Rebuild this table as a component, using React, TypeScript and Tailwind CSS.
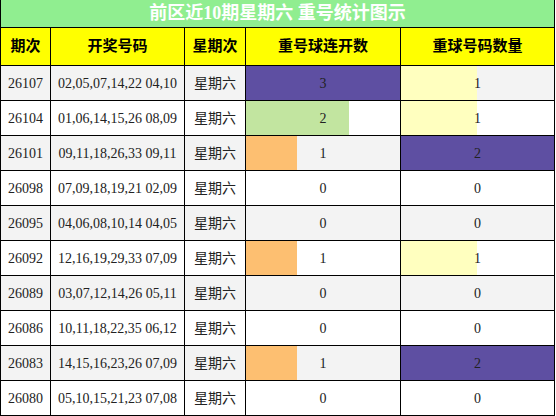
const rows = [
  { no: "26107", nums: "02,05,07,14,22 04,10", a: 3, b: 1 },
  { no: "26104", nums: "01,06,14,15,26 08,09", a: 2, b: 1 },
  { no: "26101", nums: "09,11,18,26,33 09,11", a: 1, b: 2 },
  { no: "26098", nums: "07,09,18,19,21 02,09", a: 0, b: 0 },
  { no: "26095", nums: "04,06,08,10,14 04,05", a: 0, b: 0 },
  { no: "26092", nums: "12,16,19,29,33 07,09", a: 1, b: 1 },
  { no: "26089", nums: "03,07,12,14,26 05,11", a: 0, b: 0 },
  { no: "26086", nums: "10,11,18,22,35 06,12", a: 0, b: 0 },
  { no: "26083", nums: "14,15,16,23,26 07,09", a: 1, b: 2 },
  { no: "26080", nums: "05,10,15,21,23 07,08", a: 0, b: 0 },
];

const headers = ["期次", "开奖号码", "星期次", "重号球连开数", "重球号码数量"];

// 连开数配色
const colorA: Record<number, string> = { 3: "#5e4fa2", 2: "#c2e5a0", 1: "#fdbf71" };
// 数量配色
const colorB: Record<number, string> = { 2: "#5e4fa2", 1: "#ffffbf" };

const cell = "flex items-center justify-center text-[14px] text-[#222]";

function BarCell({ value, max, color, odd }: { value: number; max: number; color?: string; odd: boolean }) {
  const rowBg = odd ? "#ffffff" : "#f3f3f3";
  const pct = (value / max) * 100;
  return (
    <div
      className={`${cell} ${odd ? "bg-white" : "bg-[#f3f3f3]"}`}
      style={value > 0 && color ? { background: `linear-gradient(to right, ${color} ${pct}%, ${rowBg} ${pct}%)` } : undefined}
    >
      {value}
    </div>
  );
}

export default function App() {
  const maxA = Math.max(...rows.map((r) => r.a));
  const maxB = Math.max(...rows.map((r) => r.b));

  return (
    <div className="h-[416px] w-[556px] bg-white font-['Liberation_Serif','Noto_Sans_CJK_SC',serif]">
      <div className="grid w-[555px] grid-cols-[49px_133px_60px_154px_153px] grid-rows-[27px_37px_repeat(10,34px)] gap-px bg-black px-px pb-px">
        {/* 标题 */}
        <div className="col-span-5 flex items-center justify-center bg-[#90ee90] text-[18px] font-bold text-white">
          前区近10期星期六 重号统计图示
        </div>

        {/* 表头 */}
        {headers.map((h) => (
          <div key={h} className="flex items-center justify-center bg-[#ffff00] text-[15px] font-bold text-black">
            {h}
          </div>
        ))}

        {/* 数据行 */}
        {rows.map((r, i) => {
          const odd = i % 2 === 1;
          const bg = odd ? "bg-white" : "bg-[#f3f3f3]";
          return [
            <div key={r.no + "-no"} className={`${cell} ${bg}`}>
              {r.no}
            </div>,
            <div key={r.no + "-nums"} className={`${cell} ${bg}`}>
              {r.nums}
            </div>,
            <div key={r.no + "-day"} className={`${cell} ${bg}`}>
              星期六
            </div>,
            <BarCell key={r.no + "-a"} value={r.a} max={maxA} color={colorA[r.a]} odd={odd} />,
            <BarCell key={r.no + "-b"} value={r.b} max={maxB} color={colorB[r.b]} odd={odd} />,
          ];
        })}
      </div>
    </div>
  );
}
